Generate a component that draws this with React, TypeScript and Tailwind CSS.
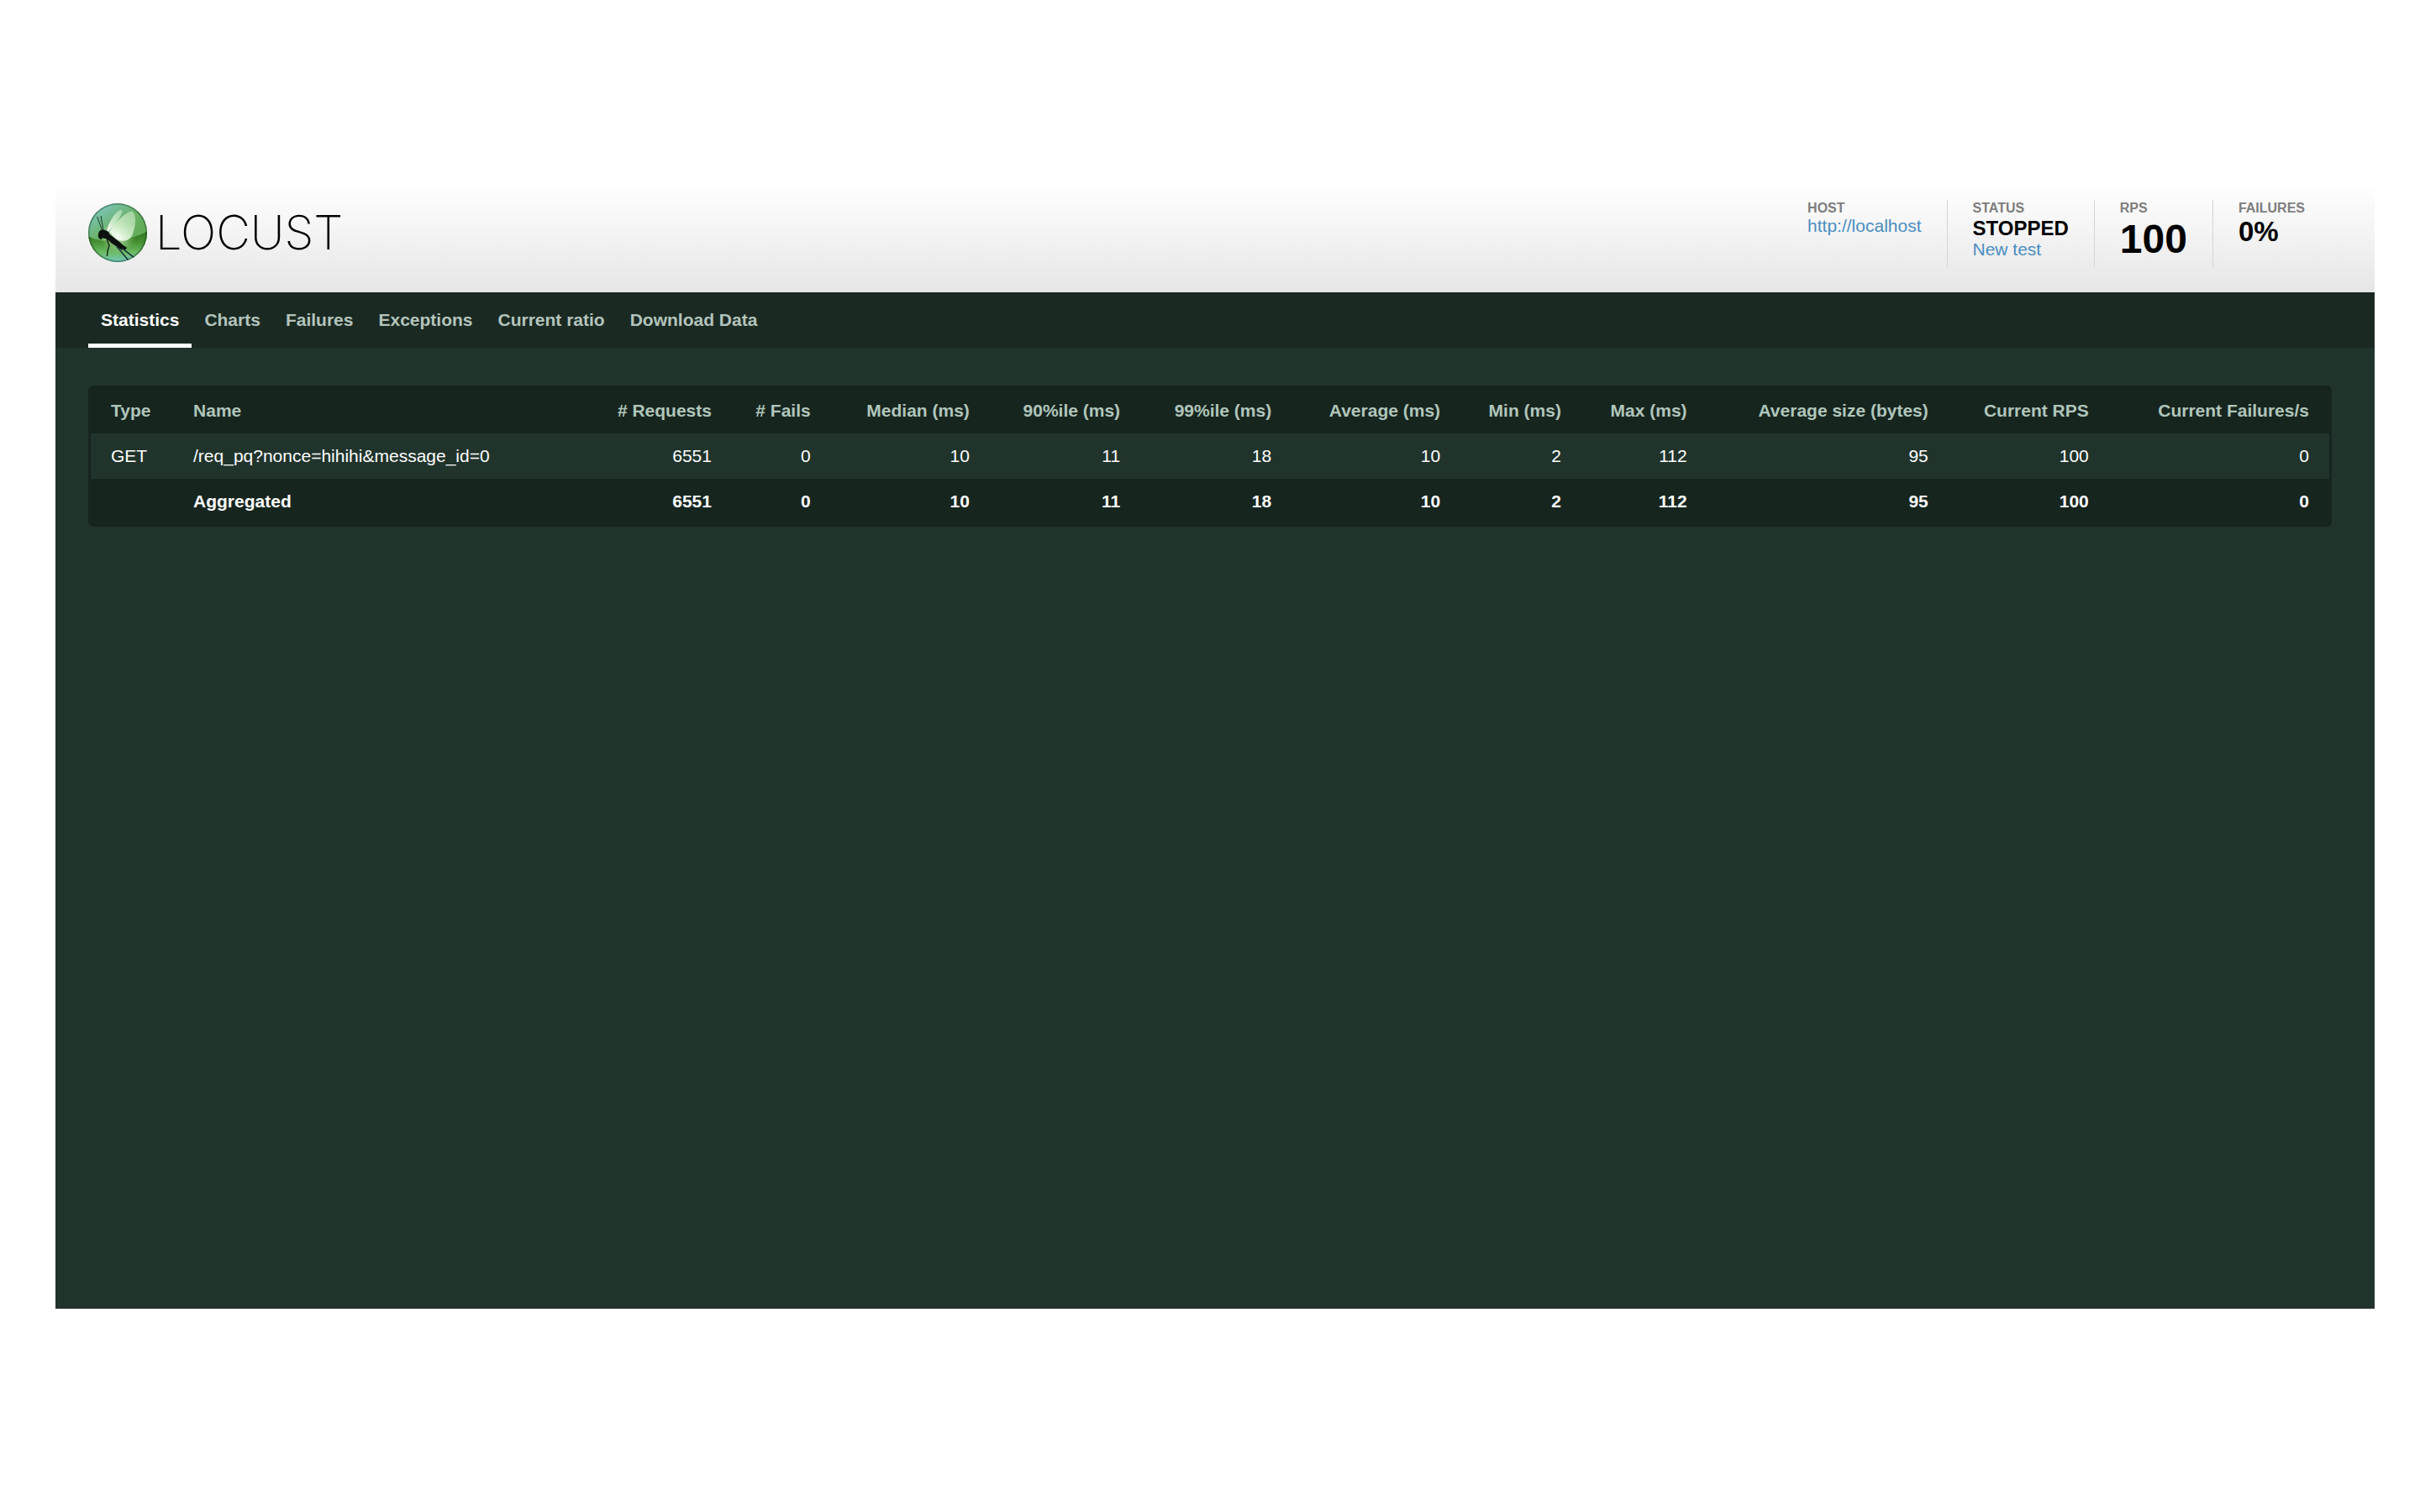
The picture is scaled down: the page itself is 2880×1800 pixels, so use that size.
import React from "react";

const tabs = ["Statistics", "Charts", "Failures", "Exceptions", "Current ratio", "Download Data"];

const columns = [
  { label: "Type", width: "w-[3.68%]" },
  { label: "Name", width: "w-[18.76%]" },
  { label: "# Requests", width: "w-[6.2%]" },
  { label: "# Fails", width: "w-[4.42%]" },
  { label: "Median (ms)", width: "w-[7.1%]" },
  { label: "90%ile (ms)", width: "w-[6.73%]" },
  { label: "99%ile (ms)", width: "w-[6.76%]" },
  { label: "Average (ms)", width: "w-[7.54%]" },
  { label: "Min (ms)", width: "w-[5.4%]" },
  { label: "Max (ms)", width: "w-[5.62%]" },
  { label: "Average size (bytes)", width: "w-[10.78%]" },
  { label: "Current RPS", width: "w-[7.17%]" },
  { label: "Current Failures/s", width: "w-[9.84%]" },
];

const values = ["6551", "0", "10", "11", "18", "10", "2", "112", "95", "100", "0"];

const rows = [
  { type: "GET", name: "/req_pq?nonce=hihihi&message_id=0", values, total: false },
  { type: "", name: "Aggregated", values, total: true },
];

function LogoMark() {
  return (
    <svg viewBox="0 0 210 210" className="size-[70px] shrink-0" aria-hidden="true">
      <defs>
        <linearGradient id="ball" x1="0.1" y1="0" x2="0.7" y2="0.9">
          <stop offset="0" stopColor="#86ccd6" />
          <stop offset="0.25" stopColor="#74bd98" />
          <stop offset="0.5" stopColor="#6bb266" />
          <stop offset="1" stopColor="#5ba74f" />
        </linearGradient>
        <linearGradient id="ground" x1="0" y1="0" x2="0" y2="1">
          <stop offset="0" stopColor="#2f6f1c" />
          <stop offset="0.35" stopColor="#459030" />
          <stop offset="0.7" stopColor="#6cbc66" />
          <stop offset="1" stopColor="#74c8c4" />
        </linearGradient>
        <radialGradient id="glow" cx="0.5" cy="0.57" r="0.3">
          <stop offset="0" stopColor="#ffffff" stopOpacity="0.95" />
          <stop offset="0.35" stopColor="#e4f8dd" stopOpacity="0.5" />
          <stop offset="1" stopColor="#a8dc9c" stopOpacity="0" />
        </radialGradient>
        <linearGradient id="wing" x1="0.9" y1="0" x2="0.2" y2="1">
          <stop offset="0" stopColor="#cfeccb" stopOpacity="0.55" />
          <stop offset="0.6" stopColor="#dcf5d5" stopOpacity="0.8" />
          <stop offset="1" stopColor="#ffffff" stopOpacity="0.95" />
        </linearGradient>
        <radialGradient id="rim" cx="0.5" cy="0.5" r="0.5">
          <stop offset="0.93" stopColor="#14401f" stopOpacity="0" />
          <stop offset="1" stopColor="#14401f" stopOpacity="0.7" />
        </radialGradient>
        <clipPath id="disc">
          <circle cx="105" cy="105" r="105" />
        </clipPath>
      </defs>
      <g clipPath="url(#disc)">
        <rect width="210" height="210" fill="url(#ball)" />
        <path d="M0 118C40 138 70 136 105 132C150 126 185 116 210 100V210H0Z" fill="url(#ground)" />
        <rect width="210" height="210" fill="url(#glow)" />
        <path d="M66 102C70 72 98 26 118 23C126 24 118 46 102 66C92 80 80 92 70 102Z" fill="url(#wing)" />
        <path d="M76 102C92 72 136 28 156 29C174 38 170 84 158 112C146 138 122 138 104 128C92 120 84 110 76 102Z" fill="url(#wing)" />
        <rect width="210" height="210" fill="url(#rim)" />
        <path d="M37 106C38 98 46 94 54 95C66 96 74 100 76 110L112 138L126 151L138 158L134 165L118 166L104 156L84 143L72 132L64 127L50 124L47 130L39 126L35 118Z" fill="#0c120d" />
        <g fill="none" stroke="#101c14" strokeLinejoin="round">
          <path d="M32 48L50 97M45 45L54 97" strokeWidth="2.5" />
          <path d="M66 128L75 150L70 168L67 189" strokeWidth="4" />
          <path d="M101 153L143 203M120 160L164 194" strokeWidth="4.5" stroke="#18303a" />
        </g>
      </g>
    </svg>
  );
}

function Stat({ label, children }: { label: string; children: React.ReactNode }) {
  return (
    <div className="flex h-20 flex-col border-l border-[#d4d4d4] px-[30px] first:border-l-0">
      <span className="text-[16px] leading-5 font-bold text-[#7d7d7d] uppercase">{label}</span>
      {children}
    </div>
  );
}

export default function App() {
  return (
    <div className="min-h-screen bg-white pt-[218px] pr-[54px] pb-[242px] pl-[66px] font-['Liberation_Sans',Arial,sans-serif] text-[21px] leading-[22px]">
      <div className="flex min-h-[1340px] flex-col border-b-2 border-[#29302c] bg-[#20342c]">
        <header className="flex h-[130px] justify-between bg-linear-to-b from-white to-[#e6e6e6] pr-[53px] pl-[39px]">
          <a href="#" className="flex h-[118px] items-center gap-[10px] text-black">
            <LogoMark />
            <span className="font-['Inter',sans-serif] text-[56px] leading-[70px] font-extralight">LOCUST</span>
          </a>
          <div className="flex pt-5">
            <Stat label="Host">
              <a href="#" className="text-[#4a8dc1]">http://localhost</a>
            </Stat>
            <Stat label="Status">
              <span className="text-[24px] leading-[28px] font-bold">STOPPED</span>
              <a href="#" className="text-[#4a8dc1]">New test</a>
            </Stat>
            <Stat label="RPS">
              <span className="text-[48px] leading-[54px] font-bold">100</span>
            </Stat>
            <Stat label="Failures">
              <span className="text-[33px] leading-[36px] font-bold">0%</span>
            </Stat>
          </div>
        </header>

        <nav className="flex h-[66px] bg-[#1a2a23] px-[39px]">
          {tabs.map((tab, i) => (
            <button
              key={tab}
              type="button"
              className={
                i === 0
                  ? "border-b-[5px] border-white px-[15px] pt-[5px] font-bold text-white"
                  : "border-b-[5px] border-transparent px-[15px] pt-[5px] font-bold text-[#b4c4bc]"
              }
            >
              {tab}
            </button>
          ))}
        </nav>

        <main className="pt-[45px] pr-[51px] pl-[39px]">
          <div className="rounded-md border-[3px] border-[#17251f] bg-[#17251f]">
            <table className="w-full table-fixed whitespace-nowrap">
              <thead>
                <tr className="h-[54px] text-[#b0c6bb]">
                  {columns.map((c, i) => (
                    <th
                      key={c.label}
                      scope="col"
                      className={`${c.width} ${i < 2 ? "pl-6 text-left" : "pr-6 text-right"} font-bold`}
                    >
                      {c.label}
                    </th>
                  ))}
                </tr>
              </thead>
              <tbody>
                {rows.map((r) => (
                  <tr key={r.name} className={r.total ? "h-[54px] font-bold text-white" : "h-[54px] bg-[#20342c] text-white"}>
                    <td className="pl-6">{r.type}</td>
                    <td className="pl-6">{r.name}</td>
                    {r.values.map((v, i) => (
                      <td key={i} className="pr-6 text-right">
                        {v}
                      </td>
                    ))}
                  </tr>
                ))}
              </tbody>
            </table>
          </div>
        </main>
      </div>
    </div>
  );
}
